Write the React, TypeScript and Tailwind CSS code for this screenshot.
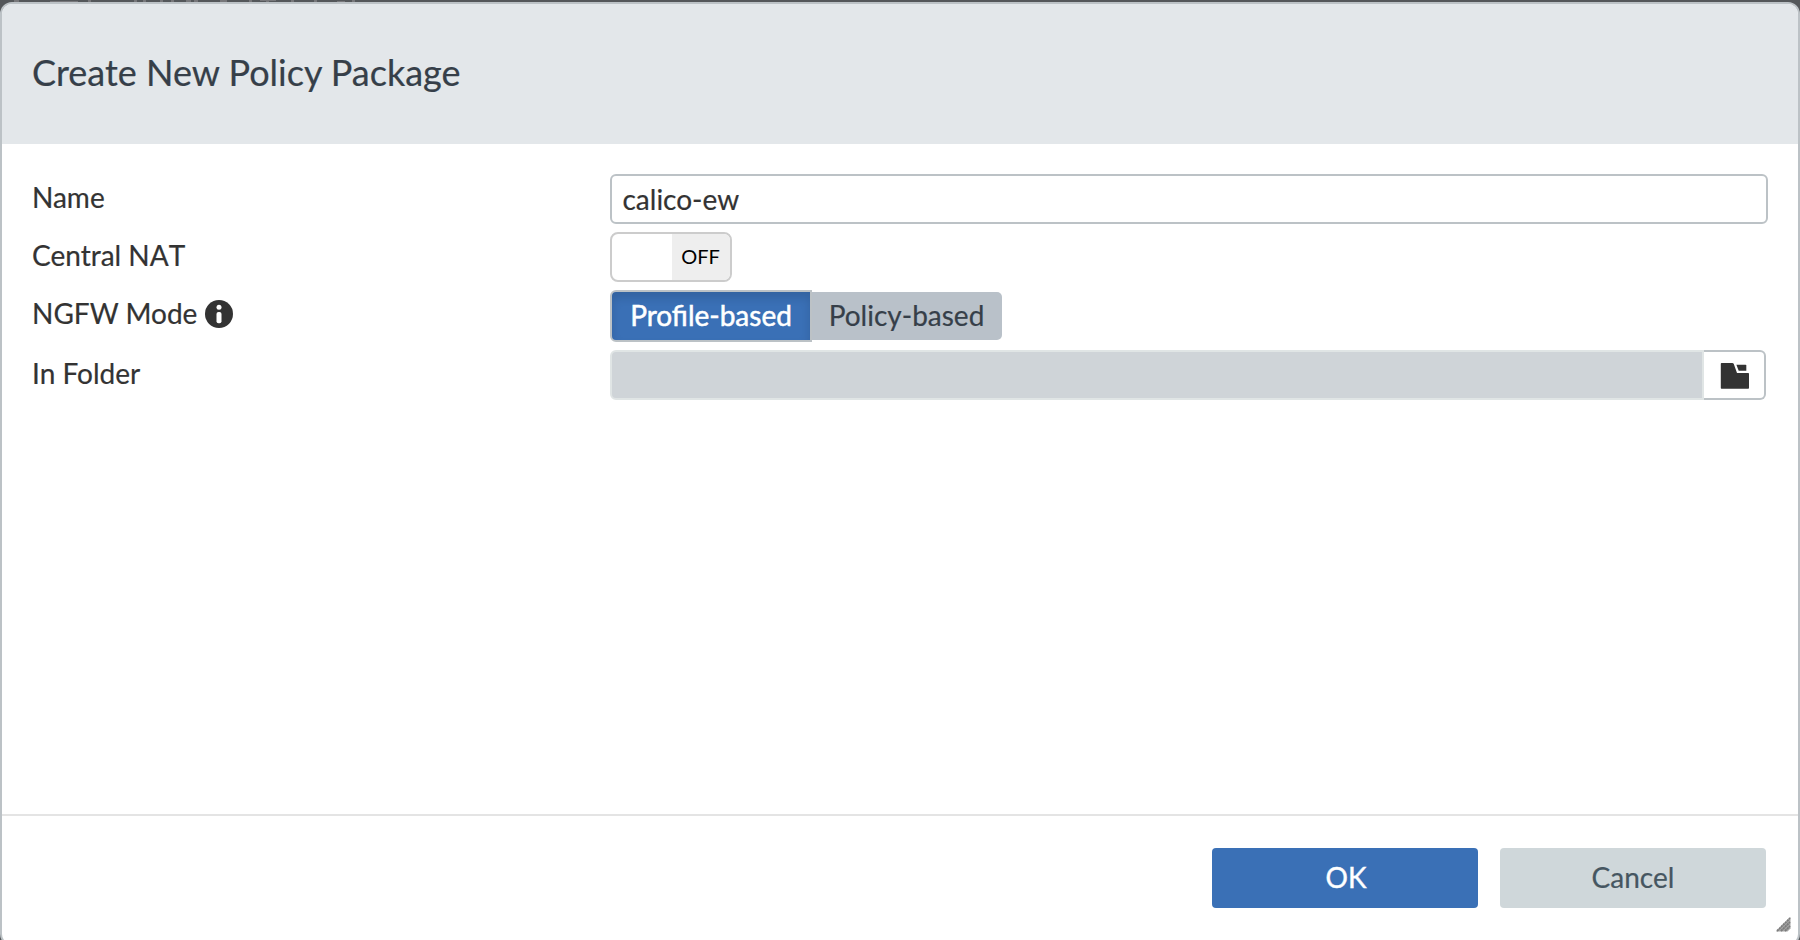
import React, { useState } from "react";

function InfoIcon() {
  return (
    <svg width="28" height="28" viewBox="0 0 28 28" className="relative top-px shrink-0">
      <circle cx="14" cy="14" r="14" fill="#333333" />
      <circle cx="14" cy="7.2" r="2.5" fill="#ffffff" />
      <rect x="11.5" y="12" width="5" height="11.2" rx="2" fill="#ffffff" />
    </svg>
  );
}

function FolderIcon() {
  return (
    <svg width="30" height="28" viewBox="0 0 30 28" className="relative top-px left-px">
      <path d="M1.8 1h10.4c.8 0 1.3.4 1.6 1.1L17 11h11c.6 0 1 .4 1 1v13.8c0 .6-.4 1-1 1H1.8c-.6 0-1-.4-1-1V2c0-.6.4-1 1-1z" fill="#333333" />
      <path d="M16.4 2.8h9.2c.4 0 .7.3.7.7v5.3h-7.6z" fill="#333333" />
    </svg>
  );
}

function ResizeGrip() {
  return (
    <svg width="16" height="16" viewBox="0 0 16 16" className="absolute right-[6px] bottom-[12px]">
      <path d="M0 15.5L14.5 1v11.5l-3 3z" fill="#a6a6a6" />
      <path d="M1 15L14 2M5 15L14 6M9 15L14 10" stroke="#7c7c7c" strokeWidth="1.8" strokeDasharray="2.2 0.6" />
    </svg>
  );
}

function BackdropStrip() {
  return (
    <svg width="400" height="2" viewBox="0 0 400 2" className="block">
      <path
        d="M14 0h5v2h-5zM50 1h28v1H50zM88 0h3v2h-3zM134 0h3v2h-3zM143 0h3v2h-3zM160 0h3v2h-3zM171 0h3v2h-3zM186 0h5v2h-5zM194 0h4v2h-4zM220 0h7v2h-7zM249 0h3v2h-3zM260 0h16v1h-16zM266 1h3v1h-3zM291 0h3v2h-3zM314 0h3v2h-3zM337 1h8v1h-8zM352 0h3v2h-3z"
        fill="#77777a"
      />
    </svg>
  );
}

function Row({ label, children, className }: { label: React.ReactNode; children: React.ReactNode; className: string }) {
  return (
    <div className={`flex items-start ${className}`}>
      <div className="flex h-[46px] w-[578px] shrink-0 items-center leading-[46px]">{label}</div>
      {children}
    </div>
  );
}

export default function App() {
  const [name, setName] = useState("calico-ew");
  return (
    <div className="h-[940px] w-[1800px] overflow-hidden bg-[#54575a] font-['Lato',sans-serif] text-[28px] text-[#333333] [-webkit-text-stroke:0.2px]">
      <BackdropStrip />
      <div className="relative flex h-[944px] flex-col overflow-hidden rounded-[12px] border-2 border-[#bcc2c6] bg-white">
        <header className="flex h-[140px] shrink-0 items-center bg-[#e3e7ea] pb-1 pl-[30px]">
          <h1 className="text-[36px] leading-[44px] text-[#363f49]">Create New Policy Package</h1>
        </header>
        <main className="h-[670px] shrink-0 pt-[30px] pl-[30px]">
          <Row label="Name" className="h-[58px]">
            <input
              value={name}
              onChange={(e) => setName(e.target.value)}
              className="h-[50px] w-[1158px] rounded-[6px] border-2 border-[#bcc2c6] bg-white px-[10.5px] outline-none"
            />
          </Row>
          <Row label={<span className="whitespace-pre">Central <span className="[font-kerning:none]">NAT</span></span>} className="h-[58px]">
            <button className="flex h-[50px] w-[122px] overflow-hidden rounded-[8px] border-2 border-[#cccccc] bg-white">
              <span className="w-[60px]" />
              <span className="h-full flex-1 bg-[#eeeeee] pr-px text-center text-[20px] leading-[44px] text-black [-webkit-text-stroke:0]">OFF</span>
            </button>
          </Row>
          <Row
            label={
              <span className="flex items-center gap-[7.5px]">
                NGFW Mode
                <InfoIcon />
              </span>
            }
            className="h-[60px]"
          >
            <div className="flex items-center">
              <button className="h-[52px] w-[202px] rounded-l-[6px] border-2 border-[#bcc2c6] bg-[#3a70b6] pb-0.5 text-white shadow-[inset_0_6px_10px_rgba(0,0,0,0.12)] [-webkit-text-stroke:0.5px]">
                Profile-based
              </button>
              <button className="h-12 w-[190px] rounded-r-[5px] bg-[#b9c1c9] pr-px pb-0.5 text-[#363f49]">Policy-based</button>
            </div>
          </Row>
          <Row label="In Folder" className="h-[50px]">
            <div className="h-[50px] w-[1094px] rounded-l-[6px] border-2 border-[#e0e5e5] bg-[#cfd4d8]" />
            <button className="flex h-[50px] w-[62px] items-center justify-center rounded-r-[6px] border-2 border-l-0 border-[#bcc2c6] bg-white">
              <FolderIcon />
            </button>
          </Row>
        </main>
        <footer className="flex flex-1 items-start justify-end gap-[22px] border-t-2 border-[#e4e4e4] pt-8 pr-8">
          <button className="h-[60px] w-[266px] rounded-[4px] bg-[#3a70b6] pb-0.5 pl-0.5 text-white [-webkit-text-stroke:0.4px]">OK</button>
          <button className="h-[60px] w-[266px] rounded-[4px] bg-[#cfd7da] pb-0.5 text-[#465661]">Cancel</button>
        </footer>
        <ResizeGrip />
      </div>
    </div>
  );
}
